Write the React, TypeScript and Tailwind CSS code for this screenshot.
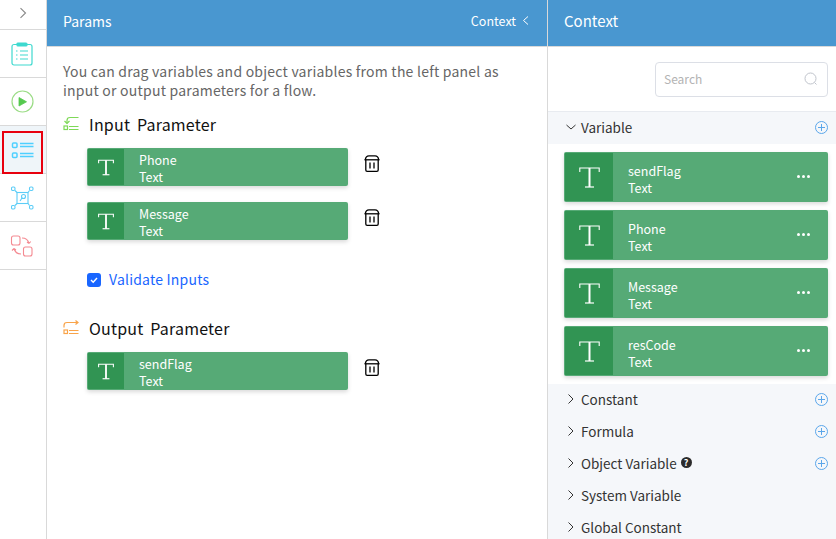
import React from "react";

function TIcon({ big }: { big?: boolean }) {
  return (
    <div className={big ? "w-[48px] h-[48px] bg-[#319453] flex items-center justify-center" : "w-[36px] h-[36px] bg-[#319453] flex items-center justify-center"}>
      <svg width={big ? 21 : 16} height={big ? 21 : 17} viewBox="0 0 21 21" fill="none" stroke="#fff">
        <path d="M.8 5V1h19.400v4" strokeWidth={big ? 1.1 : 1.400} />
        <path d="M10.500 1v19" strokeWidth={big ? 2 : 2.400} />
        <path d="M6 20h9" strokeWidth={big ? 1.200 : 1.500} />
      </svg>
    </div>
  );
}

function Trash() {
  return (
    <svg className="ml-[16px] mt-[7px]" width="16" height="17" viewBox="0 0 16 17" fill="none" stroke="#000" strokeWidth="1.300">
      <path d="M.5 4.800h15" />
      <path d="M1.300 4.800C1.600 2 2.800.8 5 .8h6c2.200 0 3.400 1.200 3.700 4" />
      <path d="M1.800 4.800V15c0 .8.500 1.300 1.300 1.300h9.800c.8 0 1.300-.5 1.300-1.300V4.800" />
      <path d="M6 7.500v6M10 7.500v6" />
    </svg>
  );
}

function ParamCard({ name, mb }: { name: string; mb?: string }) {
  return (
    <div className={`flex items-start ${mb ?? ""}`}>
      <div className="w-[261px] h-[38px] bg-[#56aa76] rounded-[2px] p-px flex shadow-[0_2px_4px_rgba(0,0,0,0.15)]">
        <TIcon />
        <div className="ml-[15px] text-white text-[12.5px] leading-[17px] pt-[2px]">
          <div>{name}</div>
          <div>Text</div>
        </div>
      </div>
      <Trash />
    </div>
  );
}

function VarCard({ name }: { name: string }) {
  return (
    <div className="w-[264px] h-[50px] bg-[#56aa76] rounded-[2px] p-px flex shadow-[0_2px_4px_rgba(0,0,0,0.15)] items-stretch">
      <TIcon big />
      <div className="ml-[15px] flex-1 text-white text-[12.5px] leading-[17px] pt-[9px]">
        <div>{name}</div>
        <div>Text</div>
      </div>
      <div className="flex items-center gap-[2px] mr-[17px] mb-[2px]">
        <span className="w-[3px] h-[3px] rounded-full bg-white" />
        <span className="w-[3px] h-[3px] rounded-full bg-white" />
        <span className="w-[3px] h-[3px] rounded-full bg-white" />
      </div>
    </div>
  );
}

function Plus() {
  return (
    <svg width="13" height="13" viewBox="0 0 13 13" fill="none" stroke="#5aa6ea" strokeWidth="1">
      <circle cx="6.500" cy="6.500" r="6" />
      <path d="M6.500 3v7M3 6.500h7" />
    </svg>
  );
}

function Chevron({ down }: { down?: boolean }) {
  return (
    <svg width="10" height="10" viewBox="0 0 10 10" fill="none" stroke="#333" strokeWidth="1">
      {down ? <path d="M.5 3l4.500 4 4.500-4" /> : <path d="M2.500.5l4.500 4.500-4.500 4.500" />}
    </svg>
  );
}

function Section({ label, plus, help }: { label: string; plus?: boolean; help?: boolean }) {
  return (
    <div className="h-[32px] flex items-center pl-[18px] pr-[8px] text-[13.500px] text-[#333]">
      <span className="mb-[3px]"><Chevron /></span>
      <span className="ml-[5px] mb-[2px]">{label}</span>
      {help && (
        <span className="ml-[4px] mb-[3px] w-[11px] h-[11px] rounded-full bg-[#2b2b2b] text-white text-[9px] leading-[11px] text-center font-bold">?</span>
      )}
      <span className="ml-auto mb-[1px]">{plus && <Plus />}</span>
    </div>
  );
}

function NavItem({ children, active }: { children: React.ReactNode; active?: boolean }) {
  return (
    <div className={`relative h-[48px] border-b border-[#d9d9d9] flex items-center justify-center ${active ? "bg-[#eff5f9]" : ""}`}>
      {active && <div className="absolute left-[2px] top-[5px] w-[41px] h-[43px] border-[2px] border-[#e8000e]" />}
      {children}
    </div>
  );
}

export default function App() {
  return (
    <div className="w-[836px] h-[539px] flex overflow-hidden bg-white font-['Noto_Sans_CJK_SC','Liberation_Sans',sans-serif]">
      <aside className="w-[47px] shrink-0 border-r border-[#d9d9d9] flex flex-col">
        <div className="h-[30px] border-b border-[#d9d9d9] flex items-center justify-center pb-[4px]">
          <svg width="12" height="12" viewBox="0 0 12 12" fill="none" stroke="#888" strokeWidth="1.100"><path d="M3.500 1.200L8.500 6l-5 4.800" /></svg>
        </div>
        <NavItem>
          <svg className="mr-[2px]" width="24" height="24" viewBox="0 0 24 24" fill="none" stroke="#3fd9cf" strokeWidth="1.200">
            <rect x="2" y="2.500" width="20" height="20.500" rx="2" />
            <rect x="7" y="1" width="10" height="3" rx="1" fill="#3fd9cf" />
            <path d="M6 9h1.500M10 9h8M6 13h1.500M10 13h8M6 17h1.500M10 17h8" />
          </svg>
        </NavItem>
        <NavItem>
          <svg className="mr-[1px]" width="24" height="24" viewBox="0 0 24 24" fill="none">
            <circle cx="11.500" cy="11.500" r="10.500" stroke="#9bdc86" strokeWidth="1.200" />
            <path d="M8 7.500v8.500l7.500-4.200z" fill="#55c94f" stroke="#55c94f" strokeWidth="0.800" strokeLinejoin="round" />
          </svg>
        </NavItem>
        <NavItem active>
          <svg width="24" height="20" viewBox="0 0 24 20" fill="none" stroke="#4fd0ff" strokeWidth="1.500">
            <rect x="1.500" y="3" width="4.500" height="4.500" rx="1" />
            <rect x="1.500" y="13" width="4.500" height="4.500" rx="1" />
            <path d="M9 3.500h13.500M9 6.500h13.500M9 13.500h13.500M9 16.500h13.500" />
          </svg>
        </NavItem>
        <NavItem>
          <svg width="24" height="24" viewBox="0 0 24 24" fill="none" stroke="#5ccdf7" strokeWidth="1.100">
            <rect x="6" y="6.500" width="11" height="11" />
            <rect x=".5" y="1" width="3.500" height="3.500" rx="1.200" />
            <rect x="18.500" y="1" width="3.500" height="3.500" rx="1.200" />
            <rect x=".5" y="19.500" width="3.500" height="3.500" rx="1.200" />
            <rect x="18.500" y="19.500" width="3.500" height="3.500" rx="1.200" />
            <path d="M4 4.500l2 2M18.500 4.500l-1.500 2M4 19.500l2-2M18.500 19.500l-1.500-2" />
            <circle cx="12.500" cy="10.500" r="2" />
            <path d="M11 12l-2 3" />
          </svg>
        </NavItem>
        <NavItem>
          <svg className="mr-[2px]" width="24" height="24" viewBox="0 0 24 24" fill="none" strokeWidth="1.100">
            <rect x="1.500" y="2" width="8.500" height="9" rx="2" stroke="#f48a92" />
            <rect x="13.500" y="13" width="8.500" height="9" rx="2" stroke="#f48a92" />
            <path d="M12 4c3 0 6 1.500 7 5.500M19 9.500l-2-1.500M19 9.500l1.800-2" stroke="#f48a92" />
            <path d="M11 20c-3 0-6-1.500-7-5.500M4 14.500l-2 2M4 14.500l2 1.500" stroke="#f48a92" />
          </svg>
        </NavItem>
      </aside>

      <main className="w-[501px] shrink-0 border-r border-[#d9d9d9] flex flex-col">
        <header className="h-[47px] shrink-0 bg-[#4997d0] border-b border-[#d9d9d9] flex items-center justify-between pl-[16px] pr-[18px] pb-[3px] text-white">
          <span className="text-[14px]">Params</span>
          <span className="flex items-center gap-[6px] text-[12.500px]">
            Context
            <svg className="mb-[1px]" width="7" height="10" viewBox="0 0 7 10" fill="none" stroke="#fff" strokeWidth="1"><path d="M6 .5L1.500 4.500 6 8.500" /></svg>
          </span>
        </header>
        <div className="pl-[16px] pt-[15px]">
          <p className="w-[460px] text-[14px] leading-[19px] text-[#666] tracking-[0.23px]">
            You can drag variables and object variables from the left panel as input or output parameters for a flow.
          </p>
          <div className="flex items-center gap-[10px] mt-[11px] h-[26px]">
            <svg width="16" height="16" viewBox="0 0 16 16" fill="none" stroke="#7ed957" strokeWidth="1.200">
              <path d="M15.500 1.500H7c-2 0-3 1-3 3v3" />
              <path d="M1.500 5L4 7.500 6.500 5" />
              <rect x="1" y="10" width="3.500" height="3.500" />
              <path d="M6 10.500h9.500M6 13.500h9.500" />
            </svg>
            <span className="text-[16px] text-[#111] tracking-[0.2px] [word-spacing:3px]">Input Parameter</span>
          </div>
          <div className="ml-[24px] mt-[11px]">
            <ParamCard name="Phone" mb="mb-[16px]" />
            <ParamCard name="Message" />
            <label className="flex items-center mt-[30px] h-[20px]">
              <span className="w-[14px] h-[14px] rounded-[3px] bg-[#1966ff] flex items-center justify-center">
                <svg width="10" height="10" viewBox="0 0 10 10" fill="none" stroke="#fff" strokeWidth="1.400"><path d="M2 5l2.200 2.200L8 3" /></svg>
              </span>
              <span className="ml-[8px] text-[14px] text-[#1966ff] tracking-[0.2px] mb-[1px]">Validate Inputs</span>
            </label>
          </div>
          <div className="flex items-center gap-[10px] mt-[25px] h-[26px]">
            <svg width="16" height="16" viewBox="0 0 16 16" fill="none" stroke="#f9a44a" strokeWidth="1.200">
              <path d="M1 7.500V5.500c0-2 1-3 3-3h11M12.500 0.500l2.500 2-2.500 2" />
              <rect x="1" y="10" width="3.500" height="3.500" />
              <path d="M6 10.500h9.500M6 13.500h9.500" />
            </svg>
            <span className="text-[16px] text-[#111] tracking-[0.2px] [word-spacing:3px]">Output Parameter</span>
          </div>
          <div className="ml-[24px] mt-[11px]">
            <ParamCard name="sendFlag" />
          </div>
        </div>
      </main>

      <section className="w-[288px] shrink-0 flex flex-col">
        <header className="h-[47px] shrink-0 bg-[#4997d0] border-b border-[#d9d9d9] flex items-center pl-[16px] pb-[3px] text-white text-[15px]">
          Context
        </header>
        <div className="h-[64px] shrink-0 flex justify-end pt-[15px] pr-[8px]">
          <div className="w-[173px] h-[35px] border border-[#dcdfe6] rounded-[4px] flex items-center justify-between pl-[8px] pr-[9px]">
            <span className="text-[12px] text-[#b3b3b3] mb-[2px]">Search</span>
            <svg className="mb-[1px]" width="14" height="14" viewBox="0 0 14 14" fill="none" stroke="#c0c4cc" strokeWidth="1">
              <circle cx="6.500" cy="6.500" r="5.500" />
              <path d="M10.500 10.500l2 2" />
            </svg>
          </div>
        </div>
        <div className="h-[33px] shrink-0 bg-[#f5f7fa] border-t border-[#e8ebf0] flex items-center pl-[18px] pr-[8px] text-[13.500px] text-[#333]">
          <span className="mb-[3px]"><Chevron down /></span>
          <span className="ml-[5px] mb-[2px]">Variable</span>
          <span className="ml-auto mb-[1px]"><Plus /></span>
        </div>
        <div className="shrink-0 pl-[16px] pt-[8px] pb-[8px] flex flex-col gap-[8px]">
          <VarCard name="sendFlag" />
          <VarCard name="Phone" />
          <VarCard name="Message" />
          <VarCard name="resCode" />
        </div>
        <div className="flex-1 bg-[#f5f7fa]">
          <Section label="Constant" plus />
          <Section label="Formula" plus />
          <Section label="Object Variable" plus help />
          <Section label="System Variable" />
          <Section label="Global Constant" />
        </div>
      </section>
    </div>
  );
}
